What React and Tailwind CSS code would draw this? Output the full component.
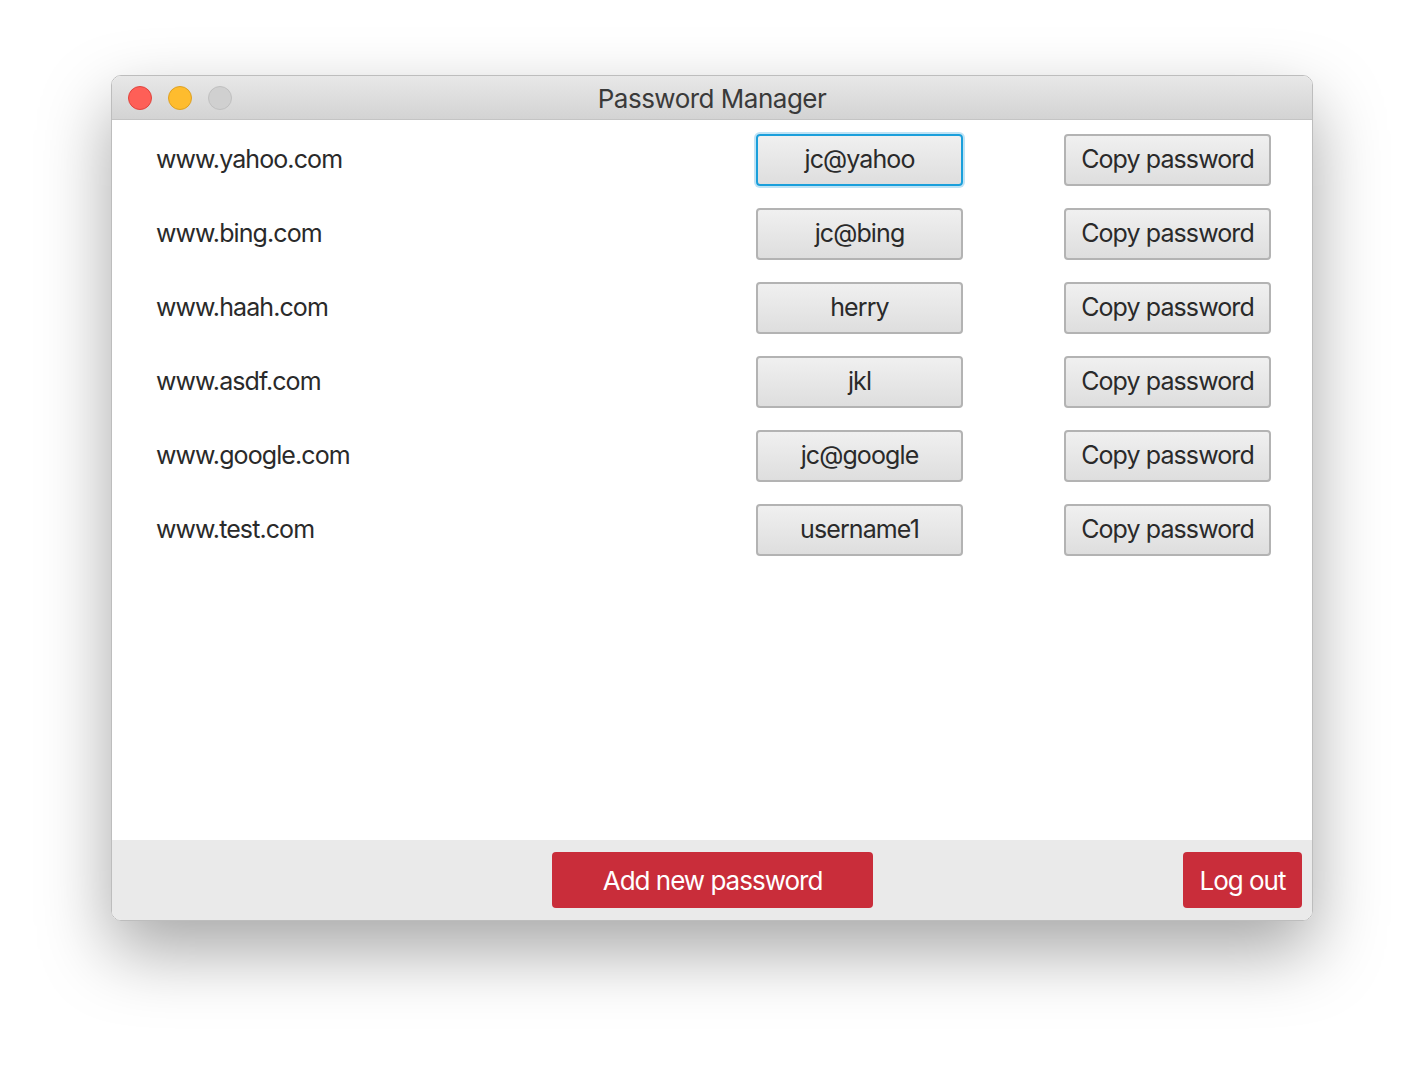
import React from 'react';

const entries = [
  { site: 'www.yahoo.com', user: 'jc@yahoo' },
  { site: 'www.bing.com', user: 'jc@bing' },
  { site: 'www.haah.com', user: 'herry' },
  { site: 'www.asdf.com', user: 'jkl' },
  { site: 'www.google.com', user: 'jc@google' },
  { site: 'www.test.com', user: 'username1' },
];

const FONT = "font-['Inter','Liberation_Sans',sans-serif]";

const GrayButton = ({ children, focused }) => (
  <button
    className={`h-[52px] w-[207px] rounded-[4px] border-2 bg-gradient-to-b from-[#f0f0f0] to-[#dedede] text-[25px] tracking-[-0.9px] text-[#2a2a2a] ${
      focused ? 'border-[#1a9fdb] shadow-[0_0_0_2px_#bfe3f5]' : 'border-[#b3b3b3]'
    }`}
  >
    {children}
  </button>
);

export default function App() {
  return (
    <div className={`min-h-screen bg-white pl-[111px] pt-[75px] ${FONT}`}>
      <div className="flex h-[846px] w-[1202px] flex-col overflow-hidden rounded-[10px] border border-[#bdbdbd] shadow-[0_30px_70px_rgba(0,0,0,0.35)]">
        {/* title bar */}
        <div className="relative flex h-[44px] items-center border-b border-[#c4c4c4] bg-gradient-to-b from-[#e8e8e8] to-[#d3d3d3]">
          <div className="flex gap-4 pl-[16px]">
            <span className="h-6 w-6 rounded-full border border-[#e0443e] bg-[#fe5f57]" />
            <span className="h-6 w-6 rounded-full border border-[#dea123] bg-[#febc2e]" />
            <span className="h-6 w-6 rounded-full border border-[#c0c0c0] bg-[#d0d0d0]" />
          </div>
          <div className="absolute inset-0 flex items-center justify-center pt-[2px] text-[26px] tracking-[-0.5px] text-[#3a3a3a]">
            Password Manager
          </div>
        </div>

        {/* list */}
        <div className="flex flex-1 flex-col gap-[22px] bg-white pl-[44px] pr-[41px] pt-[14px]">
          {entries.map((e, i) => (
            <div key={e.site} className="flex h-[52px] items-center">
              <div className="flex-1 text-[25px] tracking-[-0.9px] text-[#2a2a2a]">{e.site}</div>
              <GrayButton focused={i === 0}>{e.user}</GrayButton>
              <div className="ml-[101px]">
                <GrayButton>Copy password</GrayButton>
              </div>
            </div>
          ))}
        </div>

        {/* footer */}
        <div className="flex h-[80px] items-center bg-[#eaeaea] pl-[440px] pr-[10px]">
          <button className="h-[56px] w-[321px] rounded-[4px] bg-[#c92d3a] text-[26px] tracking-[-1px] text-white">
            Add new password
          </button>
          <div className="flex-1" />
          <button className="h-[56px] w-[119px] rounded-[4px] bg-[#c92d3a] text-[26px] tracking-[-1px] text-white">
            Log out
          </button>
        </div>
      </div>
    </div>
  );
}
